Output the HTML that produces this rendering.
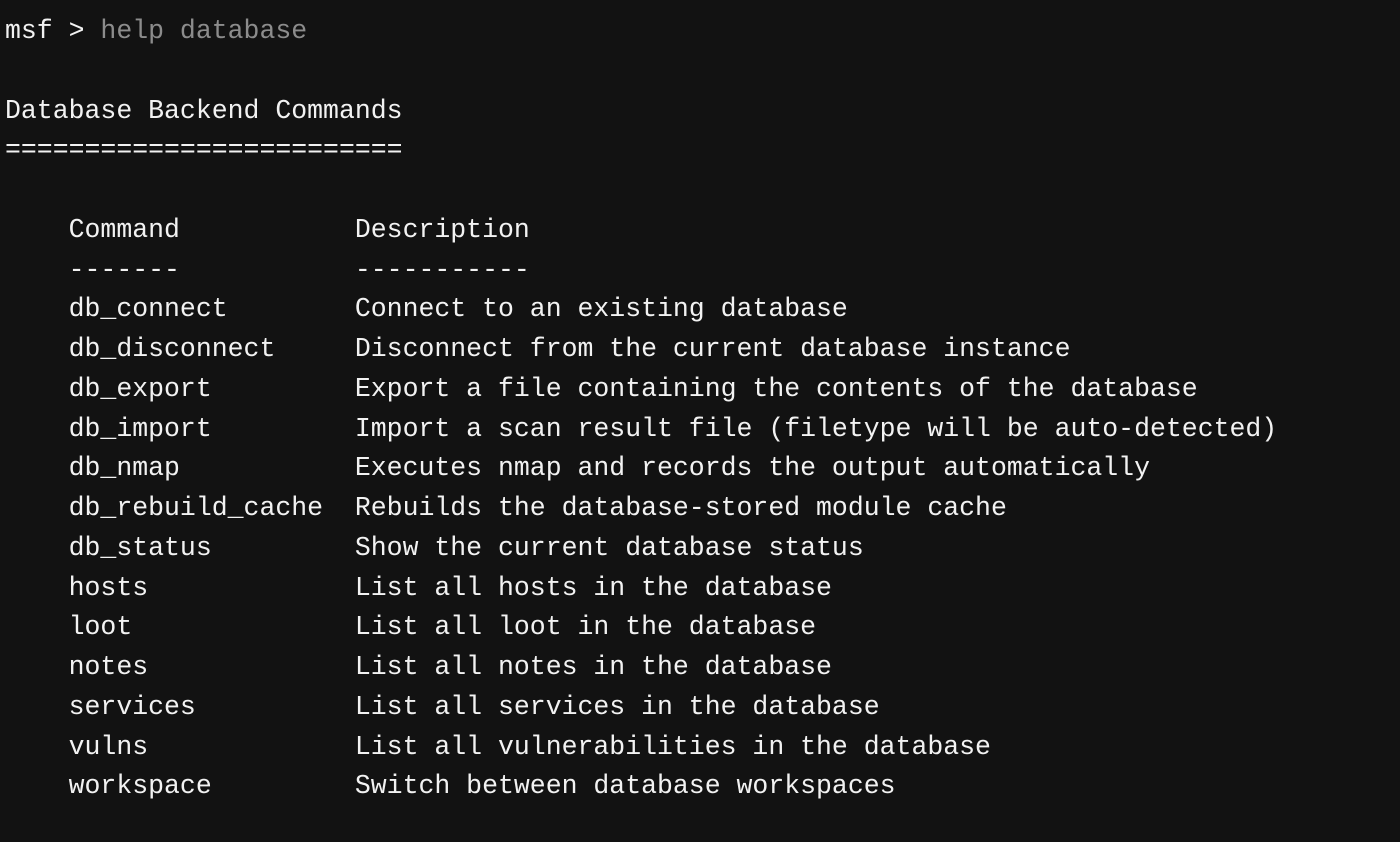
<!DOCTYPE html>
<html><head><meta charset="utf-8"><style>
html,body{margin:0;padding:0;background:#121212;width:1400px;height:842px;overflow:hidden}
pre{margin:0;padding:12px 0 0 5px;font-family:"Liberation Mono",monospace;font-size:26.5px;line-height:39.75px;color:#f2f2f2;white-space:pre}
.g{color:#8c8c8c}
</style></head><body><pre>msf &gt; <span class="g">help database</span>

Database Backend Commands
=========================

    Command           Description
    -------           -----------
    db_connect        Connect to an existing database
    db_disconnect     Disconnect from the current database instance
    db_export         Export a file containing the contents of the database
    db_import         Import a scan result file (filetype will be auto-detected)
    db_nmap           Executes nmap and records the output automatically
    db_rebuild_cache  Rebuilds the database-stored module cache
    db_status         Show the current database status
    hosts             List all hosts in the database
    loot              List all loot in the database
    notes             List all notes in the database
    services          List all services in the database
    vulns             List all vulnerabilities in the database
    workspace         Switch between database workspaces
</pre></body></html>
